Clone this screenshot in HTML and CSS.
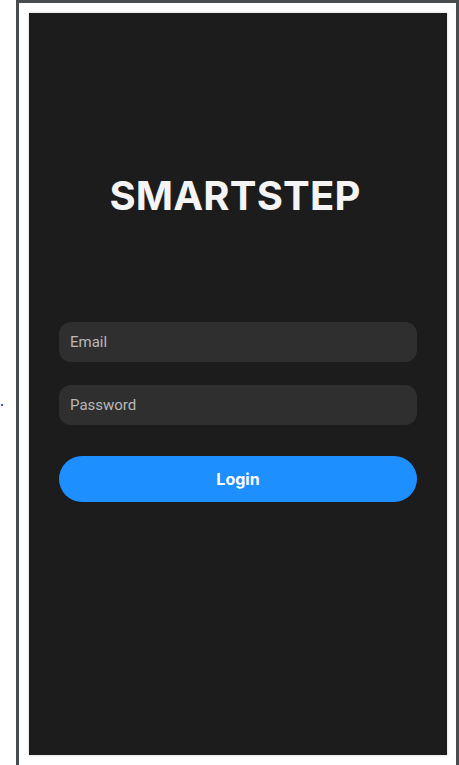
FILE: index.html
```html
<!DOCTYPE html>
<html lang="en">
<head>
<meta charset="utf-8">
<title>SmartStep</title>
<link rel="stylesheet" href="styles.css">
</head>
<body>
<span class="dot"></span>
<div class="frame">
  <main class="panel">
    <h1 class="title">SMARTSTEP</h1>
    <form class="form">
      <input class="field" type="email" placeholder="Email">
      <input class="field" type="password" placeholder="Password">
      <button class="login" type="button">Login</button>
    </form>
  </main>
</div>
</body>
</html>
```
FILE: styles.css
```css
html, body {
  margin: 0;
  padding: 0;
  background: #ffffff;
  height: 765px;
  overflow: hidden;
}
body {
  position: relative;
  font-family: "Inter", "Roboto", "Liberation Sans", sans-serif;
}
.dot {
  position: absolute;
  left: 1px;
  top: 404px;
  width: 2px;
  height: 2px;
  background: #3a4cff;
}
.frame {
  margin-left: 16px;
  width: 443px;
  height: 765px;
  box-sizing: border-box;
  border: 3px solid #4a4d50;
  border-bottom: none;
  padding: 10px 9px 0 10px;
}
.panel {
  height: 742px;
  background: #1c1c1c;
  box-shadow: 0 0 2px 1px #e6e6e6;
  display: flex;
  flex-direction: column;
  padding: 0 30px;
  box-sizing: border-box;
}
.title {
  margin: 155px 0 0 0;
  padding-right: 6px;
  text-align: center;
  color: #f4f4f4;
  font-size: 40px;
  font-weight: 700;
  letter-spacing: 0.2px;
  line-height: 56px;
}
.form {
  margin-top: 98px;
  display: flex;
  flex-direction: column;
}
.field {
  height: 40px;
  border: none;
  border-radius: 12px;
  background: #2f2f2f;
  padding: 0 11px;
  font-family: "Roboto", "Liberation Sans", sans-serif;
  font-size: 15px;
  color: #e0e0e0;
  outline: none;
  margin-bottom: 23px;
}
.field::placeholder {
  color: #b9b9b9;
}
.login {
  margin-top: 8px;
  height: 46px;
  border: none;
  border-radius: 23px;
  background: #1e8fff;
  color: #ffffff;
  font-family: "Inter", "Roboto", "Liberation Sans", sans-serif;
  font-size: 16px;
  font-weight: 700;
}
```
